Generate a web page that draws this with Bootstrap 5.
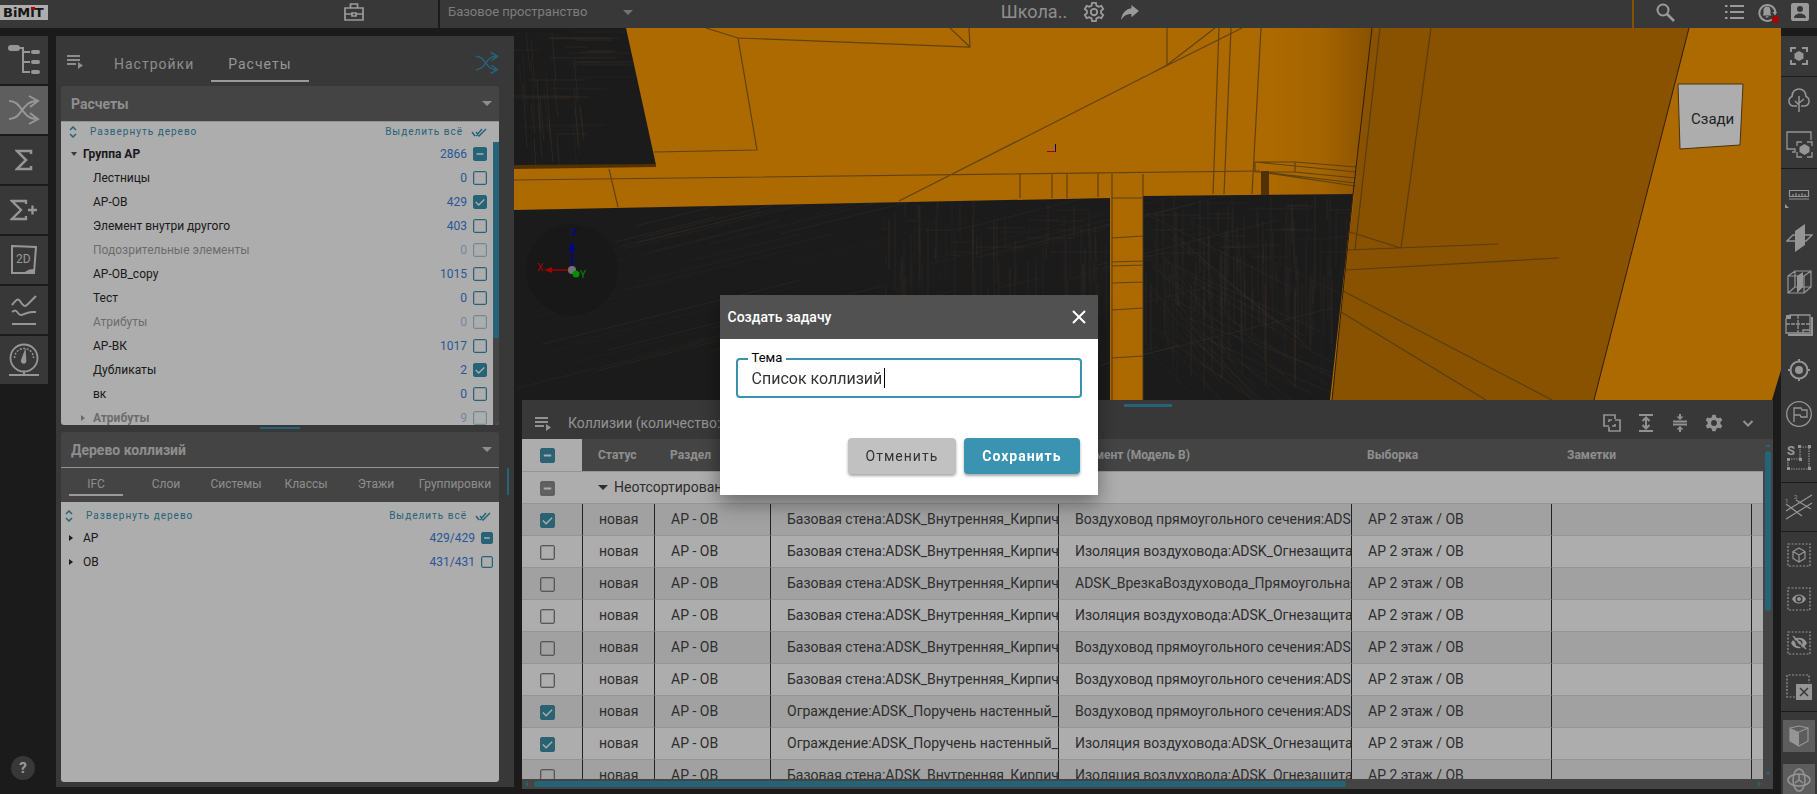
<!DOCTYPE html>
<html lang="ru">
<head>
<meta charset="utf-8">
<meta name="viewport" content="width=device-width, initial-scale=1">
<title>BiMiT – Коллизии</title>
<link href="https://cdn.jsdelivr.net/npm/bootstrap@5.3.0/dist/css/bootstrap.min.css" rel="stylesheet">
<style>
:root{--teal:#3a92b0;--bar:#535353;--head:#656565;--ink:#292929;--pale:#e4e4e4;--num:#3b7fe0}
body{font-family:Roboto,"Noto Sans",sans-serif;font-size:13px;line-height:20px;background:#292929;color:var(--ink)}
button{font-family:inherit}
svg{display:block;flex:none}
.ico{fill:none;stroke:currentColor;stroke-width:2}
.solid{fill:currentColor;stroke:none}
.plain{border:0;background:none;padding:0;color:inherit}
/* top bar */
.topbar{height:28px;background:var(--bar);color:var(--pale)}
.topbar>div{height:28px;padding-bottom:4px}
.brand-box{width:48px;height:15px;background:#fff;color:#222}
.tb-left{width:438px}
.case-btn{margin-right:74px}
.space-pick{border-left:2px solid var(--ink);width:220px;padding:0 25px 0 8px;color:#a8a8a8}
.space-pick select{appearance:none;border:0;background:none;color:#b8b8b8;font-size:13px;outline:0}
.proj{padding-right:150px}
.proj-name{font-size:18px;color:#d0d0d0}
.tb-right{border-left:2px solid #c87a00;width:185px;gap:14px}
.find-btn{margin:0 36px 0 22px}
.dotred{width:7px;height:7px;background:#ff0000;border-radius:50%;right:-2px;bottom:-1px}
/* side rail */
.rail{width:56px;padding-top:8px}
.rail button{width:48px;height:48px;background:var(--bar);color:#dedede;margin-bottom:2px}
.rail button.on{background:#8b8b8b}
.help-btn{width:24px;height:24px;border-radius:50%;background:var(--bar);color:var(--pale);font-weight:700;font-size:15px;margin:0 0 14px 11px}
/* left panel */
.side{width:458px;margin:8px 0 7px;padding:0 15px 5px 5px;background:var(--bar)}
.side-tabs{height:50px;color:#d0d0d0;padding-left:6px}
.side-tabs .menu-btn{margin-right:14px}
.side-tabs .tabbtn{font-size:14px;letter-spacing:1px;height:34px;padding:0 17px;margin-top:8px;border-bottom:2px solid transparent}
.side-tabs .tabbtn.on{border-color:var(--pale);color:#dedede}
.shuf-ico{color:var(--teal);margin-top:4px}
.sect-head{height:36px;background:var(--head);border-bottom:1px solid #d8d8d8;border-radius:3px 3px 0 0;color:#d2d2d2;font-size:14px;font-weight:700;padding:0 7px 0 10px}
.caret{width:0;height:0;border:5px solid transparent;border-top-color:currentColor;border-bottom:0}
.caret-s{display:block;width:0;height:0;border:3px solid transparent;border-top:4px solid #555;border-bottom:0}
.caret-r{display:block;width:0;height:0;border:3px solid transparent;border-left:4px solid currentColor;border-right:0}
.tree-box{background:#fff;border-radius:0 0 3px 3px;overflow:hidden}
.tree-a{height:303px}
.tools{height:20px;color:var(--teal);gap:8px;padding:0 12px 0 8px}
.tools.low{height:28px;padding:0 8px 0 4px}
.tools button{font-size:10px;letter-spacing:1px;line-height:20px}
.tools .open-btn{margin-left:5px;margin-right:auto}
.trow{height:24px;font-size:12px;padding:0 6px 0 20px}
.trow.root{padding-left:10px}
.trow.flat{padding-left:8px}
.trow.off{opacity:.45}
.trow .mk{width:12px}
.trow.flat .mk{width:14px}
.trow .num{color:var(--num);margin-right:6px}
.clash{margin-top:-4px}
.vbar{width:6px;background:var(--head)}
.vbar i{display:block;height:196px;background:var(--teal)}
.grip-h{height:2px;width:40px;background:var(--teal);margin:2px auto 3px 199px}
.kinds{display:grid;grid-template-columns:repeat(5,70px) 1fr;height:34px;background:var(--head);color:#d0d0d0}
.kinds button{font-size:12px;margin:0 8px 8px;border-bottom:2px solid transparent;padding-top:6px;white-space:nowrap}
.kinds button:last-child{margin:0 0 8px}
.kinds button.on{border-color:var(--pale)}
.grip-v{position:absolute;right:5px;top:432px;width:2px;height:27px;background:var(--teal)}
/* tick boxes */
.tick{appearance:none;margin:0;flex:none;width:14px;height:14px;border:1px solid var(--teal);border-radius:2px;background:transparent center/100% no-repeat;box-shadow:inset 0 0 0 1px rgba(58,146,176,.25)}
.tick.sm{width:12px;height:12px}
.tick:checked{background-color:var(--teal);background-image:url("data:image/svg+xml,%3Csvg xmlns='http://www.w3.org/2000/svg' viewBox='0 0 14 14'%3E%3Cpath d='M2 7l3.5 3.5L12 4' fill='none' stroke='white' stroke-width='1.5'/%3E%3C/svg%3E")}
.tick.part{background-color:var(--teal);background-image:url("data:image/svg+xml,%3Csvg xmlns='http://www.w3.org/2000/svg' viewBox='0 0 14 14'%3E%3Cpath d='M3 7h8' stroke='white' stroke-width='2'/%3E%3C/svg%3E")}
.grid-t .tick{width:15px;height:15px;vertical-align:middle;border-color:#808080;box-shadow:inset 0 0 0 1px rgba(128,128,128,.35)}
.grid-t .tick:checked,.grid-t .tick.part{border-color:var(--teal)}
.grid-t .tick.grey{background-color:#909090;border-color:#909090}
/* work area */
.scene{position:absolute;left:0;top:0;width:100%;height:100%}
.dock{height:389px;margin:0 8px 5px;background:var(--bar);position:relative}
.dock-grip{width:48px;height:3px;background:var(--teal);margin:4px auto 0}
.dock-head{height:32px;padding:0 15px 0 13px;color:#d8d8d8;font-size:14px;gap:17px}
.dock-tools{gap:14px}
.dock-tools button{width:20px;height:20px}
.grid-t{table-layout:fixed;width:100%;font-size:14px;line-height:20px;margin:0;border-collapse:separate;border-spacing:0;color:#444}
.grid-t th,.grid-t td{height:32px;padding:5px 0 6px 16px;overflow:hidden;white-space:nowrap;border-bottom:1px solid #dcdcdc}
.grid-t thead th{height:33px;background:var(--head);color:#d2d2d2;font-size:12px;font-weight:700}
.grid-t thead th:first-child{background:#fff}
.grid-t th:first-child,.grid-t td:first-child{padding:0 0 0 18px}
.grid-t tbody tr{background:#fff}
.grid-t tbody tr:nth-child(even){background:#eee}
.grid-t tbody tr.rec td+td{border-left:1px solid #333}
.vscroll{width:10px;background:var(--head);padding:5px 2px 4px;color:var(--teal)}
.vscroll i{width:6px;height:160px;border-radius:3px;background:var(--teal);margin-top:4px}
.hscroll{height:10px;background:var(--head);padding:2px 12px 2px 3px;color:var(--teal);gap:6px}
.hscroll i{height:6px;width:812px;border-radius:3px;background:var(--teal)}
.tri{width:0;height:0;border:3px solid transparent}
.tri.u{border-bottom-color:currentColor;border-top:0}.tri.d{border-top-color:currentColor;border-bottom:0}
.tri.l{border-right-color:currentColor;border-left:0}.tri.r{border-left-color:currentColor;border-right:0}
/* right tool strip */
.strip{width:36px;padding-top:8px;color:#dcdcdc}
.strip .grp{background:var(--bar);padding:1px 0 2px;margin-bottom:1px}
.strip .grp.long{padding-top:3px}
.strip button{width:36px;height:44px}
.strip .grp.one button{height:37px}
.strip .grp.tall button{height:45px}
.strip .grp.keys{height:90px;padding:8px 2px 0;display:flex;flex-direction:column;gap:12px}
.strip .keys button{width:32px;height:32px;background:#8a8a8a}
/* dialog */
.modal-backdrop.show{opacity:.32}
.task-dlg{width:378px;max-width:378px;margin:28px auto;padding-bottom:4px}
.task-dlg .modal-content{border:0;border-radius:0;box-shadow:0 8px 20px rgba(0,0,0,.4)}
.task-dlg .modal-header{height:44px;background:#515151;color:#fff;border:0;border-radius:0;padding:0 12px 0 8px}
.task-dlg .modal-title{font-size:14px;font-weight:500;line-height:20px}
.task-dlg .modal-body{padding:19px 16px 40px}
.fld{height:40px;border:2px solid var(--teal);border-radius:4px;padding:0 14px;font-size:16px;color:#333;caret-color:transparent}
.fld:focus{box-shadow:none;border-color:var(--teal);color:#333}
.fld-name{position:absolute;left:12px;top:-10px;background:#fff;padding:0 4px;font-size:13px;line-height:20px;color:#000}
.fld-caret{position:absolute;left:148px;top:10px;width:1px;height:20px;background:#000}
.task-dlg .modal-footer{border:0;padding:0 18px 21px;gap:8px}
.task-dlg .modal-footer .btn{margin:0;height:36px;border:0;border-radius:4px;font-size:14px;padding:0 18px;letter-spacing:1px;box-shadow:0 2px 3px rgba(0,0,0,.35)}
.btn-no{background:#c1c1c1;color:#333}
.task-dlg .btn-yes{background:#3a93b0;color:#fff;font-weight:700}
</style>
</head>
<body class="vh-100 overflow-hidden d-flex flex-column">

<header class="topbar d-flex flex-shrink-0">
  <div class="tb-left d-flex align-items-center">
    <a href="#" class="brand-box text-decoration-none" aria-label="BiMiT">
      <svg width="48" height="15"><text x="3" y="12" font-family="DejaVu Sans" font-weight="700" font-size="13" fill="#222">BiMiT</text><rect x="31" y="2" width="4" height="3" fill="#f00"/></svg>
    </a>
    <button class="plain ms-auto case-btn" aria-label="Проекты"><svg class="ico" width="20" height="18" viewBox="0 0 20 18"><path d="M6.500 5V1h7v4M1 5h18v12H1zM1 11h7m4 0h7M8 10h4v3H8z" stroke-width="1.700"/></svg></button>
  </div>
  <div class="space-pick d-flex align-items-center justify-content-between">
    <select aria-label="Пространство"><option>Базовое пространство</option></select>
    <span class="caret"></span>
  </div>
  <div class="proj flex-fill d-flex align-items-center justify-content-center gap-3">
    <span class="proj-name">Школа..</span>
    <button class="plain" aria-label="Параметры"><svg class="ico" width="22" height="22" viewBox="0 0 24 24"><path d="M10 2h4l.7 3 2.300 1.300 3-1 2 3.500-2.300 2v2.400l2.300 2-2 3.500-3-1L14.700 19l-.7 3h-4l-.7-3L7 17.700l-3 1-2-3.500 2.300-2v-2.400L2 8.800l2-3.500 3 1L9.300 5z"/><circle cx="12" cy="12" r="3.500"/></svg></button>
    <button class="plain" aria-label="Поделиться"><svg width="18" height="15" viewBox="0 0 19 16"><path class="solid" d="M11 0l8 6.500L11 13V9.500C6 9.500 3 11 0 16 1 9 4.500 4.500 11 3.500z"/></svg></button>
  </div>
  <div class="tb-right d-flex align-items-center">
    <button class="plain find-btn" aria-label="Поиск"><svg class="ico" width="19" height="19" viewBox="0 0 19 19"><circle cx="7" cy="7" r="5.500"/><path d="M11 11l7 7" stroke-width="2.500"/></svg></button>
    <button class="plain" aria-label="Список"><svg class="ico" width="19" height="16" viewBox="0 0 19 16"><path d="M0 2h2.500M0 8h2.500M0 14h2.500M5 2h14M5 8h14M5 14h14"/></svg></button>
    <button class="plain position-relative" aria-label="Уведомления"><svg width="19" height="19" viewBox="0 0 19 19"><path class="ico" d="M14 16.500A8 8 0 1 1 17.400 10"/><path class="solid" d="M14.500 9H19l-2 3.500zM9 3.500c-2.500 0-3.500 2-3.500 4V11L4.500 12.500h9L12.500 11V7.500c0-2-1-4-3.500-4zM7.800 13.300h2.600v1.200H7.800z"/></svg><i class="dotred position-absolute"></i></button>
    <button class="plain" aria-label="Профиль"><svg width="18" height="18" viewBox="0 0 18 18"><path class="solid" fill-rule="evenodd" d="M2 0h14a2 2 0 0 1 2 2v14a2 2 0 0 1-2 2H2a2 2 0 0 1-2-2V2a2 2 0 0 1 2-2zm7 3a3 3 0 1 0 0 6 3 3 0 0 0 0-6zM3 15h12c0-3-3-4.500-6-4.500S3 12 3 15z"/></svg></button>
  </div>
</header>

<main class="flex-fill d-flex" style="min-height:0">
  <nav class="rail d-flex flex-column flex-shrink-0">
    <button class="plain d-flex align-items-center justify-content-center" aria-label="Структура"><svg width="32" height="30" viewBox="0 0 32 30"><path class="ico" d="M10 3h5v24h7M15 7h7M15 17h7" /><g class="solid"><rect width="12" height="6" rx="3"/><rect x="23" y="5" width="9" height="4" rx="2"/><rect x="23" y="15" width="9" height="4" rx="2"/><rect x="23" y="25" width="9" height="4" rx="2"/></g></svg></button>
    <button class="plain on d-flex align-items-center justify-content-center" aria-label="Коллизии"><svg class="ico" width="32" height="30" viewBox="0 0 32 30"><path id="shuf" d="M1 6c14 0 12 18 28 18M1 24c14 0 12-18 28-18M21 1l9 5-8 6M22 18l8 6-9 5"/></svg></button>
    <button class="plain d-flex align-items-center justify-content-center" aria-label="Сумма"><svg class="ico" width="18" height="22" viewBox="0 0 18 22"><path d="M16 5V2H2l9 9-9 9h14v-3" stroke-width="2.500"/></svg></button>
    <button class="plain d-flex align-items-center justify-content-center" aria-label="Добавить сумму"><svg class="ico" width="28" height="22" viewBox="0 0 28 22"><path d="M16 5V2H2l9 9-9 9h14v-3M18 11h9M22.500 6.500v9" stroke-width="2.300"/></svg></button>
    <button class="plain d-flex align-items-center justify-content-center" aria-label="Чертежи 2D"><svg width="26" height="30" viewBox="0 0 26 30"><path class="ico" d="M1 1l24 1-2 26H1z" stroke-width="1.700"/><path class="solid" d="M12 28c3-1 4-4 11-4v4z"/><text x="5" y="18" font-size="12" fill="currentColor">2D</text></svg></button>
    <button class="plain d-flex align-items-center justify-content-center" aria-label="Графики"><svg class="ico" width="26" height="30" viewBox="0 0 26 30"><path d="M1 10c5-6 6-7 8-4 4 6 5 6 8 3l8-8M1 17c3-2 4-2 6 1 3 4 5 1 9 0 4-1.500 6-1 9-1M1 29h24"/></svg></button>
    <button class="plain d-flex align-items-center justify-content-center" aria-label="Показатели"><svg width="30" height="34" viewBox="0 0 30 34"><g class="ico"><circle cx="15" cy="15" r="13.500" stroke-width="1.800"/><path d="M5.500 15a9.500 9.500 0 0 1 19 0" stroke-dasharray="2 1.500" stroke-width="1.500"/><path d="M0 32h30M15 29v3"/></g><path class="solid" d="M16.500 5l.8 12a2.800 2.800 0 1 1-5.300 0z"/></svg></button>
    <a href="#" class="help-btn mt-auto d-flex align-items-center justify-content-center text-decoration-none">?</a>
  </nav>

  <section class="side position-relative flex-shrink-0 d-flex flex-column">
    <div class="side-tabs d-flex align-items-center">
      <button class="plain menu-btn" aria-label="Меню"><svg class="ico" width="16" height="15" viewBox="0 0 16 15"><path d="M0 2h13M0 6h13M0 10h9"/><path class="solid" d="M11 8l5 3.500-5 3.500z"/></svg></button>
      <button class="plain tabbtn">Настройки</button>
      <button class="plain tabbtn on">Расчеты</button>
      <svg class="ico shuf-ico ms-auto" width="24" height="24" viewBox="0 0 32 30"><use href="#shuf"/></svg>
    </div>
    <div class="sect-head d-flex align-items-center justify-content-between flex-shrink-0">Расчеты<span class="caret"></span></div>
    <div class="tree-box tree-a flex-shrink-0 d-flex flex-column">
      <div class="tools d-flex align-items-center flex-shrink-0">
        <svg class="ico" width="8" height="12" viewBox="0 0 8 12"><path d="M1 4l3-3 3 3M1 8l3 3 3-3" stroke-width="1.500"/></svg>
        <button class="plain open-btn">Развернуть дерево</button>
        <button class="plain">Выделить всё</button>
        <svg class="ico" width="16" height="9" viewBox="0 0 16 9"><path d="M1 4l3 4M5 4l3 4 7-7M5 8l6-7" stroke-width="1.500"/></svg>
      </div>
      <div class="d-flex flex-fill" style="min-height:0"><div class="flex-fill" id="calcTree"></div><div class="vbar"><i></i></div></div>
    </div>
    <div class="grip-h flex-shrink-0"></div>
    <div class="sect-head d-flex align-items-center justify-content-between flex-shrink-0">Дерево коллизий<span class="caret"></span></div>
    <div class="kinds flex-shrink-0">
      <button class="plain on">IFC</button><button class="plain">Слои</button><button class="plain">Системы</button><button class="plain">Классы</button><button class="plain">Этажи</button><button class="plain">Группировки</button>
    </div>
    <div class="tree-box flex-fill">
      <div class="tools low d-flex align-items-center">
        <svg class="ico" width="8" height="12" viewBox="0 0 8 12"><path d="M1 4l3-3 3 3M1 8l3 3 3-3" stroke-width="1.500"/></svg>
        <button class="plain open-btn">Развернуть дерево</button>
        <button class="plain">Выделить всё</button>
        <svg class="ico" width="16" height="9" viewBox="0 0 16 9"><path d="M1 4l3 4M5 4l3 4 7-7M5 8l6-7" stroke-width="1.500"/></svg>
      </div>
      <div id="clashTree" class="clash"></div>
    </div>
    <div class="grip-v"></div>
  </section>

  <section class="flex-fill position-relative d-flex flex-column justify-content-end" style="min-width:0">
    <svg class="scene" viewBox="514 28 1267 766" preserveAspectRatio="xMinYMin slice">
      <defs>
        <linearGradient id="shade"><stop offset="0" stop-color="#ff9c00"/><stop offset=".5" stop-color="#f29400"/><stop offset="1" stop-color="#ca7900"/></linearGradient>
        <clipPath id="voids"><path d="M514 28h112l30 137-142 2zM514 210l385-8 211-4v200H514zM1143 196l210-2-21 206h-189z"/></clipPath>
      </defs>
      <path fill="#292929" d="M514 28h1267v766H514z"/>
      <path fill="#ff9c00" d="M514 28h1267v342l-9 30H1330l23-206-210 2v204h-33V198l-596 12z"/>
      <path fill="url(#shade)" d="M1272 28h100l-17 166-83 0z"/>
      <path fill="#ca7900" d="M1372 28h317l-95 372h-262z"/>
      <path fill="#292929" d="M514 28h112l30 137-142 1z"/>
      <path fill="#7a4b00" d="M514 165l142-1v3l-142 2z"/>
      <path fill="#7a4a00" d="M1261 171h8v24h-8z"/>
      <g id="wires" clip-path="url(#voids)" fill="none" stroke="#6b5a48"></g>
      <g fill="none" stroke="#6b5020" stroke-width="1.200" opacity=".75">
        <path d="M706 28l32 10 232 9-1-19M950 28l20 19M738 38l19 112-103 2M899 201l251-127 92-46M1167 28v37l48-37M1167 65l-17 9M514 180l746-9M609 169l9 38M1020 174v24M1052 174v24M1067 174v24M1098 173v24"/>
        <path d="M1219 28l-6 166M1231 28l-7 166M1261 28l-9 166M1255 172v-10h40l61 5M1255 162l101 10M1260 172l95 14M1262 172l93 11M1295 162v10l61 6M1255 172h40"/>
        <path d="M1380 28l-25 222M1431 28l-30 220-51-16M1346 250l152-6M1346 270l213-12M1343 291l209 109M1341 312l145 88"/>
        <path d="M1112 174v226M1143 174v226M1112 198h31M1112 238l31-2M1112 262l31-1M1112 266l31-1M1112 283l31-1M1112 310l31-2M1112 358l31-2"/>
      </g>
      <path d="M1372 28l-19 166-21 206M1689 28l-95 372" fill="none" stroke="#4a2c00"/>
      <path d="M1678 84l65 0-3 61-60 4z" fill="#fff" stroke="#6b4b14"/>
      <text x="1691" y="124" font-size="15" fill="#333">Сзади</text>
      <circle cx="572" cy="270" r="46" fill="#000" opacity=".12"/>
      <path d="M572 270v-22" stroke="#0000f0" stroke-width="1.500"/><path d="M569 250l3-8 3 8z" fill="#0000f0"/>
      <path d="M572 270h-22" stroke="#f00000" stroke-width="1.500"/><path d="M552 267l-8 3 8 3z" fill="#f00000"/>
      <circle cx="572" cy="270" r="4" fill="#aaa"/><circle cx="576" cy="274" r="3.500" fill="#00d000"/>
      <g font-size="10"><text x="571" y="236" fill="#0000f0">Z</text><text x="537" y="271" fill="#f00000">X</text><text x="580" y="278" fill="#00d000">Y</text></g>
      <path d="M1047 151.500h8" stroke="#f00000"/><path d="M1055.500 144v8" stroke="#0000c0"/>
    </svg>

    <div class="dock d-flex flex-column">
      <div class="dock-grip flex-shrink-0"></div>
      <div class="dock-head d-flex align-items-center flex-shrink-0">
        <button class="plain" aria-label="Меню"><svg class="ico" width="16" height="15" viewBox="0 0 16 15"><path d="M0 2h13M0 6h13M0 10h9"/><path class="solid" d="M11 8l5 3.500-5 3.500z"/></svg></button>
        <span>Коллизии (количество: 431)</span>
        <div class="dock-tools d-flex ms-auto">
          <button class="plain" aria-label="Копировать"><svg class="ico" width="20" height="20" viewBox="0 0 20 20"><path d="M7 13H2V2h11v4M13 7h5v11H7v-4M7 9V7h3M13 11v2h-3" stroke-width="1.700"/></svg></button>
          <button class="plain" aria-label="Развернуть строки"><svg class="ico" width="20" height="20" viewBox="0 0 20 20"><path d="M3 2h14M3 18h14M10 5v10M6.500 8L10 4.500 13.500 8M6.500 12l3.500 3.500 3.500-3.500"/></svg></button>
          <button class="plain" aria-label="Свернуть строки"><svg class="ico" width="20" height="20" viewBox="0 0 20 20"><path d="M3 8.500h14M3 11.500h14M10 1v3M10 16v3"/><path class="solid" d="M6.500 3.500h7L10 7zM6.500 16.500h7L10 13z"/></svg></button>
          <button class="plain" aria-label="Настройки таблицы"><svg width="20" height="20" viewBox="0 0 24 24"><path class="solid" fill-rule="evenodd" d="M10 2h4l.7 3 2.300 1.300 3-1 2 3.500-2.300 2v2.400l2.300 2-2 3.500-3-1L14.700 19l-.7 3h-4l-.7-3L7 17.700l-3 1-2-3.500 2.300-2v-2.400L2 8.800l2-3.500 3 1L9.300 5zM12 8.500a3.500 3.500 0 1 0 0 7 3.500 3.500 0 0 0 0-7z"/></svg></button>
          <button class="plain" aria-label="Свернуть"><svg class="ico" width="20" height="20" viewBox="0 0 20 20"><path d="M5.500 8l4.500 4.500L14.500 8"/></svg></button>
        </div>
      </div>
      <div class="flex-fill d-flex" style="min-height:0">
        <div class="flex-fill overflow-hidden">
          <table class="grid-t">
            <colgroup><col style="width:60px"><col style="width:72px"><col style="width:116px"><col style="width:288px"><col style="width:293px"><col style="width:200px"><col style="width:200px"><col></colgroup>
            <thead><tr><th><input type="checkbox" class="tick part" aria-label="Выбрать все"></th><th>Статус</th><th>Раздел</th><th>Элемент (Модель А)</th><th>Элемент (Модель В)</th><th>Выборка</th><th>Заметки</th><th></th></tr></thead>
            <tbody id="recs"><tr><td><input type="checkbox" class="tick part grey" aria-label="Выбрать группу"></td><td colspan="7"><span class="d-flex align-items-center" style="gap:6px"><span class="caret"></span>Неотсортированные</span></td></tr></tbody>
          </table>
        </div>
        <div class="vscroll d-flex flex-column align-items-center"><span class="tri u"></span><i></i><span class="tri d mt-auto"></span></div>
      </div>
      <div class="hscroll d-flex align-items-center flex-shrink-0"><span class="tri l"></span><i></i><span class="tri r ms-auto"></span></div>
    </div>
  </section>

  <nav class="strip flex-shrink-0 overflow-hidden" id="strip">
    <div class="grp one">
      <button class="plain d-flex align-items-center justify-content-center" aria-label="Показать всё"><svg width="18" height="18" viewBox="0 0 18 18"><path class="ico" stroke-width="1.400" d="M1 5V1h5M12 1h5v4M17 13v4h-5M6 17H1v-4"/><path class="solid" d="M9 4l4.500 2.500v5L9 14l-4.500-2.500v-5z"/></svg></button>
    </div>
    <div class="grp">
      <button class="plain d-flex align-items-center justify-content-center" aria-label="Дерево"><svg class="ico" width="24" height="24" viewBox="0 0 24 24"><path style="stroke-width:1.500px" d="M10 18H6a5 5 0 0 1-1-9.500C5 3 9 1 12 1s7 2 7 7.500A5 5 0 0 1 18 18h-4M12 8v16M12 17l-4-4M12 15l5-4"/></svg></button>
      <button class="plain d-flex align-items-center justify-content-center" aria-label="Фрагмент"><svg width="27" height="27" viewBox="0 0 27 27"><path fill="none" stroke="currentColor" stroke-width="1.300" d="M9 21V18H1V1h24v8M5 18h4v3H6M11 15v-4h5M21 11h5v4M26 21v5h-5M16 26h-5v-5"/><path class="solid" d="M18.500 13l5 3v5l-5 3-5-3v-5z"/></svg></button>
    </div>
    <div class="grp long">
      <button class="plain d-flex align-items-center justify-content-center" aria-label="Измерения"><svg width="28" height="28" viewBox="0 0 28 28"><path fill="none" stroke="currentColor" stroke-width="1.200" d="M4.500 10.500h19v6h-19zM4 19h20M8 16v-2M11 16v-3M14 16v-2M17 16v-3M20 16v-2"/><path class="solid" d="M0 24l4 4H0z"/></svg></button>
      <button class="plain d-flex align-items-center justify-content-center" aria-label="Сечение"><svg width="27" height="28" viewBox="0 0 27 28"><path fill="none" stroke="currentColor" stroke-width="1.300" d="M7 11h19l-6 6H1z"/><path class="solid" d="M9 7l10-7v21l-10 7z"/></svg></button>
      <button class="plain d-flex align-items-center justify-content-center" aria-label="Объём сечения"><svg width="25" height="24" viewBox="0 0 25 24"><path fill="none" stroke="currentColor" stroke-width="1.200" d="M1 6h16v17H1zM1 6l7-5h16v16l-7 6M17 6l7-5M8 1v16h16M8 17l-7 6"/><path class="solid" d="M10 6l6-4v15l-6 6z"/></svg></button>
      <button class="plain d-flex align-items-center justify-content-center" aria-label="План"><svg width="28" height="24" viewBox="0 0 28 24"><g fill="none" stroke="currentColor" stroke-width="1.300"><path d="M5 1h20v18H1V5z"/><path stroke-dasharray="4 1" d="M1 10h24M13 1v18"/><path d="M18 19v-3h7"/></g><path class="solid" d="M1 1h5v4H1zM26 3h2v19H3v-2h23z"/></svg></button>
      <button class="plain d-flex align-items-center justify-content-center" aria-label="Цель"><svg width="22" height="22" viewBox="0 0 22 22"><path class="ico" d="M11 0v3M11 19v3M0 11h3M19 11h3"/><circle class="ico" cx="11" cy="11" r="8.500"/><circle class="solid" cx="11" cy="11" r="4"/></svg></button>
      <button class="plain d-flex align-items-center justify-content-center" aria-label="Флаг"><svg width="26" height="26" viewBox="0 0 26 26"><g fill="none" stroke="currentColor" stroke-width="1.300"><circle cx="13" cy="13" r="12.300"/><path d="M8 21V7h7l1 2h5v7h-6l-1-2H8"/></g></svg></button>
      <button class="plain d-flex align-items-center justify-content-center" aria-label="Область S"><svg width="24" height="26" viewBox="0 0 24 26"><text x="0" y="10" font-size="13" font-weight="700" fill="currentColor">S</text><path fill="none" stroke="currentColor" stroke-width="1.200" stroke-dasharray="1.500 1" d="M13 2h9v22H1V14h12z"/><path class="solid" d="M11 0h3v3h-3zM21 0h3v3h-3zM21 22h3v3h-3zM0 22h3v3H0zM0 13h3v3H0zM12 13h3v3h-3z"/></svg></button>
    </div>
    <div class="grp tall">
      <button class="plain d-flex align-items-center justify-content-center" aria-label="Оси"><svg width="28" height="26" viewBox="0 0 28 26"><path fill="none" stroke="currentColor" stroke-width="1.200" d="M1 17L27 1M1 25L27 9M1 10l16 12M11 6l15 9"/><g font-size="6" fill="currentColor"><text x="0" y="9">1</text><text x="9" y="5">2</text></g></svg></button>
    </div>
    <div class="grp">
      <button class="plain d-flex align-items-center justify-content-center" aria-label="Объект"><svg width="24" height="24" viewBox="0 0 24 24"><g fill="none" stroke="currentColor" stroke-width="1.200"><path stroke-dasharray="2 1.500" d="M1 1h22v22H1z"/><path d="M12 5l6 3.500v7L12 19l-6-3.500v-7zM6 8.500l6 3.500 6-3.500M12 12v7"/></g></svg></button>
      <button class="plain d-flex align-items-center justify-content-center" aria-label="Показать"><svg width="24" height="24" viewBox="0 0 24 24"><path fill="none" stroke="currentColor" stroke-width="1.200" stroke-dasharray="2 1.500" d="M1 1h22v22H1z"/><path class="solid" fill-rule="evenodd" d="M5 12c3-6 11-6 14 0-3 6-11 6-14 0zm7-3.500a3.500 3.500 0 1 0 0 7 3.500 3.500 0 0 0 0-7z"/><circle class="solid" cx="12" cy="12" r="2"/></svg></button>
      <button class="plain d-flex align-items-center justify-content-center" aria-label="Скрыть"><svg width="24" height="24" viewBox="0 0 24 24"><path fill="none" stroke="currentColor" stroke-width="1.200" stroke-dasharray="2 1.500" d="M1 1h22v22H1z"/><path class="solid" fill-rule="evenodd" d="M4 12c3-7 13-7 16 0-3 7-13 7-16 0zm8-3.500a3.500 3.500 0 1 0 0 7 3.500 3.500 0 0 0 0-7z"/><circle class="solid" cx="12" cy="12" r="2"/><path d="M4 6l14 14" stroke="#535353" stroke-width="1.500"/><path d="M6 5l13 13" stroke="currentColor" stroke-width="1.500"/></svg></button>
      <button class="plain d-flex align-items-center justify-content-center" aria-label="Сбросить выделение"><svg width="26" height="26" viewBox="0 0 26 26"><path fill="none" stroke="currentColor" stroke-width="1.200" stroke-dasharray="2 1.500" d="M9 23H1V1h22v8"/><path class="solid" d="M10 10h16v16H10z"/><path d="M14 14l8 8M22 14l-8 8" stroke="#535353" stroke-width="1.500"/></svg></button>
    </div>
    <div class="grp keys">
      <button class="plain d-flex align-items-center justify-content-center flex-shrink-0" aria-label="Куб"><svg width="20" height="22" viewBox="0 0 20 22"><path fill="none" stroke="currentColor" stroke-width="1.200" d="M1 3l9-2 9 2v13l-9 5-9-5zM10 7l9-4"/><path class="solid" d="M1 3l9 4v14l-9-5z"/></svg></button>
      <button class="plain d-flex align-items-center justify-content-center flex-shrink-0" aria-label="Орбита"><svg width="24" height="24" viewBox="0 0 24 24"><g fill="none" stroke="currentColor" stroke-width="1.500"><ellipse cx="12" cy="12" rx="11" ry="6"/><ellipse cx="12" cy="12" rx="6" ry="11"/><path d="M12 12V6M12 12l-4 3M12 12l4 3"/></g></svg></button>
    </div>
  </nav>
</main>

<div class="modal-backdrop show"></div>
<div class="modal d-block" role="dialog" aria-modal="true" aria-labelledby="dlgTitle">
  <div class="modal-dialog modal-dialog-centered task-dlg">
    <form class="modal-content">
      <div class="modal-header d-flex justify-content-between">
        <h1 class="modal-title" id="dlgTitle">Создать задачу</h1>
        <button type="button" class="plain" aria-label="Закрыть"><svg class="ico" width="14" height="14" viewBox="0 0 14 14"><path d="M1 1l12 12M13 1L1 13"/></svg></button>
      </div>
      <div class="modal-body">
        <div class="position-relative">
          <input class="form-control fld" id="topic" type="text" value="Список коллизий" autofocus>
          <label class="fld-name" for="topic">Тема</label>
          <span class="fld-caret"></span>
        </div>
      </div>
      <div class="modal-footer">
        <button type="button" class="btn btn-no">Отменить</button>
        <button type="button" class="btn btn-yes">Сохранить</button>
      </div>
    </form>
  </div>
</div>

<script src="https://cdn.jsdelivr.net/npm/bootstrap@5.3.0/dist/js/bootstrap.bundle.min.js"></script>
<script>
// name, count, tick state, dimmed, kind of node (root or folder)
const calc = [["Группа АР",2866,"part",0,"root"],["Лестницы",0],["АР-ОВ",429,"on"],["Элемент внутри другого",403],["Подозрительные элементы",0,"",1],["АР-ОВ_copy",1015],["Тест",0],["Атрибуты",0,"",1],["АР-ВК",1017],["Дубликаты",2,"on"],["вк",0],["Атрибуты",9,"",1,"folder"]];
document.getElementById("calcTree").innerHTML = calc.map(([n,c,s,off,kind],i)=>{
  const mark = kind==="root" ? '<span class="caret-s"></span>' : kind ? '<span class="caret-r"></span>' : '';
  return `<div class="trow d-flex align-items-center ${off?'off':''} ${kind==='root'?'root':''}"><span class="mk">${mark}</span><label for="c${i}" class="flex-fill ${kind?'fw-bold':''}">${n}</label><span class="num">${c}</span><input type="checkbox" id="c${i}" class="tick ${s==='part'?'part':''}" ${s==='on'?'checked':''}></div>`;
}).join("");
document.getElementById("clashTree").innerHTML = [["АР","429/429",1],["ОВ","431/431",0]].map(([n,c,p],i)=>
  `<div class="trow flat d-flex align-items-center"><span class="mk"><span class="caret-r"></span></span><label for="t${i}" class="flex-fill">${n}</label><span class="num">${c}</span><input type="checkbox" id="t${i}" class="tick sm ${p?'part':''}"></div>`).join("");
const wall="Базовая стена:ADSK_Внутренняя_Кирпич", rail="Ограждение:ADSK_Поручень настенный_", duct="Воздуховод прямоугольного сечения:ADS", iso="Изоляция воздуховода:ADSK_Огнезащита", tap="ADSK_ВрезкаВоздуховода_Прямоугольная";
document.getElementById("recs").insertAdjacentHTML("beforeend",[[wall,duct,1],[wall,iso],[wall,tap],[wall,iso],[wall,duct],[wall,duct],[rail,duct,1],[rail,iso,1],[wall,iso]].map(([a,b,s],i)=>
  `<tr class="rec"><td><input type="checkbox" class="tick" aria-label="Строка ${i+1}" ${s?'checked':''}></td><td>новая</td><td>АР - ОВ</td><td>${a}</td><td>${b}</td><td>АР 2 этаж / ОВ</td><td></td><td></td></tr>`).join(""));
// faint wireframe of the building seen through the openings
let seed=7; const rnd=()=>(seed=(seed*16807)%2147483647)/2147483647;
let w="";
for(let i=0;i<260;i++){const x=880+rnd()*470,y=195+rnd()*110,h=10+rnd()*90;w+=`<path opacity="${(.05+rnd()*.28).toFixed(2)}" d="M${x|0} ${y|0}v${h|0}"/>`;}
for(let i=0;i<60;i++){const x=880+rnd()*460,y=198+rnd()*60,l=10+rnd()*40;w+=`<path opacity="${(.05+rnd()*.25).toFixed(2)}" d="M${x|0} ${y|0}h${l|0}"/>`;}
for(let i=0;i<70;i++){const x=514+rnd()*600,y=205+rnd()*190,l=40+rnd()*220;w+=`<path opacity="${(.05+rnd()*.2).toFixed(2)}" d="M${x|0} ${y|0}l${l|0} ${-(l*.25)|0}"/>`;}
for(let i=0;i<40;i++){const x=1143+rnd()*60,y=205+rnd()*150;w+=`<path opacity="${(.05+rnd()*.2).toFixed(2)}" d="M${x|0} ${y|0}l${60+rnd()*120|0} ${60+rnd()*60|0}"/>`;}
for(let i=0;i<60;i++){const x=514+rnd()*80,y=30+rnd()*110;w+=`<path opacity="${(.08+rnd()*.3).toFixed(2)}" d="M${x|0} ${y|0}${rnd()>.5?`h${20+rnd()*50|0}`:`l4 ${30+rnd()*40|0}`}"/>`;}
document.getElementById("wires").innerHTML=w;
</script>
</body>
</html>
